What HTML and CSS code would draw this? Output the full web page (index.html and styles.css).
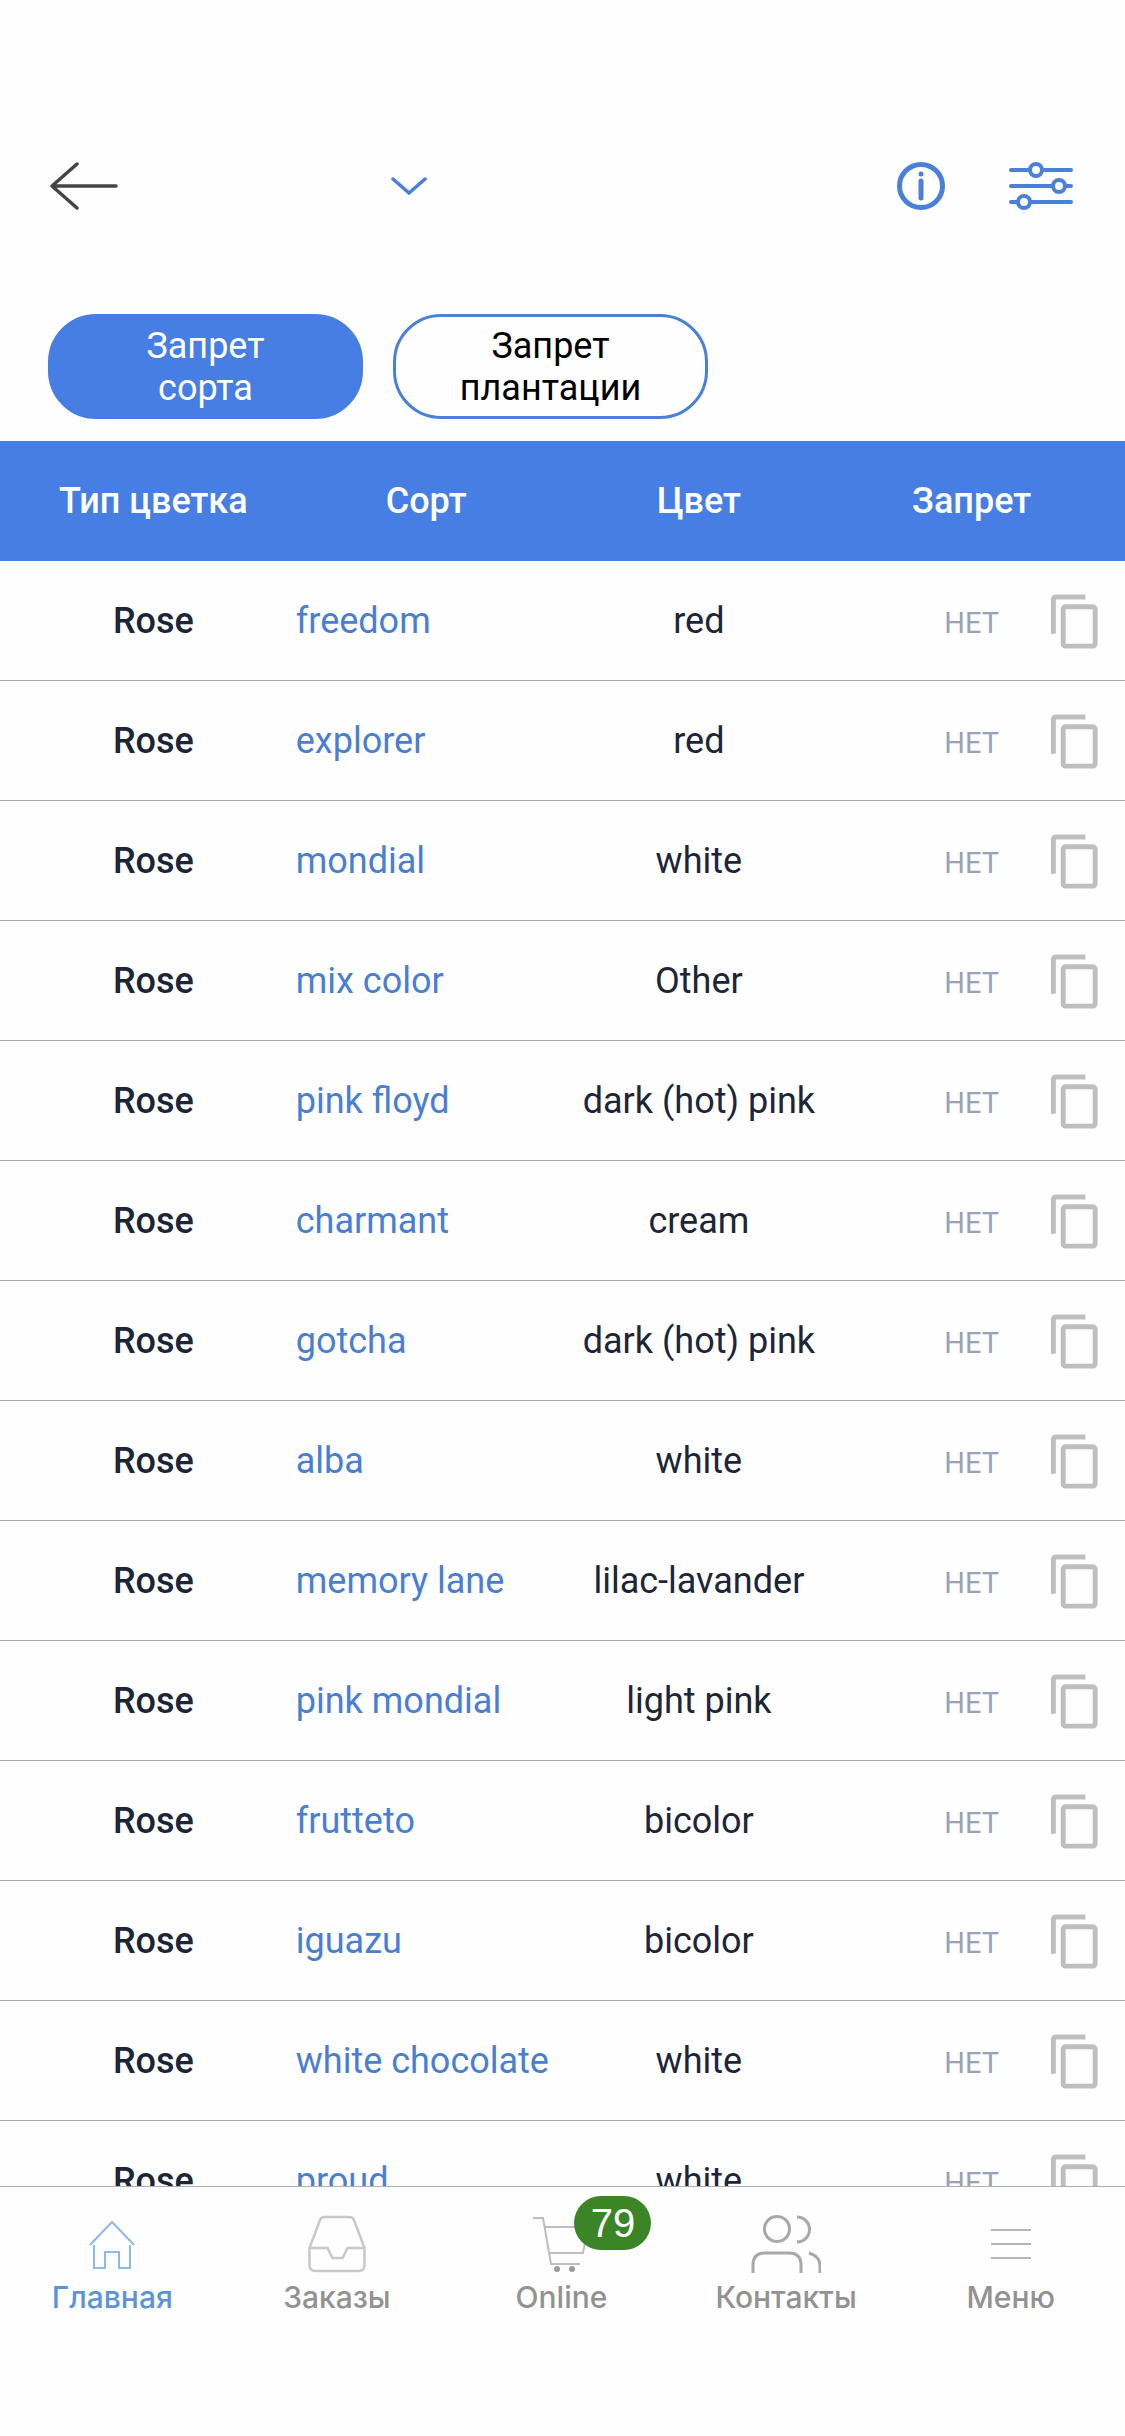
FILE: index.html
```html
<!DOCTYPE html>
<html lang="ru">
<head>
<meta charset="utf-8">
<meta name="viewport" content="width=device-width, initial-scale=1">
<title>Запрет сорта</title>
<link rel="stylesheet" href="styles.css">
</head>
<body>
<svg class="sprite" aria-hidden="true">
  <symbol id="copy" viewBox="0 0 24 24"><path d="M16 1H4c-1.100 0-2 .9-2 2v14h2V3h12V1zm3 4H8c-1.100 0-2 .9-2 2v14c0 1.100.9 2 2 2h11c1.100 0 2-.9 2-2V7c0-1.100-.9-2-2-2zm0 16H8V7h11v14z"/></symbol>
</svg>
<header class="topbar">
  <button class="icon-button" type="button" aria-label="Назад">
    <svg width="68" height="48" viewBox="0 0 68 48" fill="none" stroke="#444" stroke-width="3.500" stroke-linecap="round" stroke-linejoin="round"><path d="M27 2L2 24l25 22M2 24h64"/></svg>
  </button>
  <button class="icon-button picker" type="button" aria-label="Выбрать">
    <svg width="36" height="18" viewBox="0 0 36 18" fill="none" stroke="#4a80d8" stroke-width="3.500" stroke-linecap="round"><path d="M2 2l16 14L34 2"/></svg>
  </button>
  <div class="actions">
    <button class="icon-button" type="button" aria-label="Информация">
      <svg width="48" height="48" viewBox="0 0 48 48" fill="none" stroke="#4a80dc" stroke-linecap="round"><circle cx="24" cy="24" r="21.500" stroke-width="5"/><path d="M24 19v17" stroke-width="5"/><circle cx="24" cy="12" r="2.500" fill="#4a80dc" stroke="none"/></svg>
    </button>
    <button class="icon-button" type="button" aria-label="Фильтры">
      <svg width="64" height="48" viewBox="0 0 64 48" fill="none" stroke="#4a80dc" stroke-width="4" stroke-linecap="round"><path d="M2 8h18M34 8h28M2 24h41M57 24h5M2 40h6M22 40h40"/><circle cx="27" cy="8" r="6"/><circle cx="50" cy="24" r="6"/><circle cx="15" cy="40" r="6"/></svg>
    </button>
  </div>
</header>
<div class="tabs">
  <button class="tab tab-active" type="button">Запрет сорта</button>
  <button class="tab" type="button">Запрет плантации</button>
</div>
<main class="list">
  <table class="table">
    <thead><tr><th>Тип цветка</th><th>Сорт</th><th>Цвет</th><th>Запрет</th></tr></thead>
    <tbody id="rows"></tbody>
  </table>
</main>
<nav class="nav">
  <a class="nav-item nav-active" href="#home">
    <span class="nav-icon"><svg width="46" height="58" viewBox="0 0 46 58" fill="none" stroke="#8db8ea" stroke-width="2"><path d="M1 30L23 7l22 23M5 30v23h11V37h14v16h11V30"/></svg></span>
    <span>Главная</span>
  </a>
  <a class="nav-item" href="#orders">
    <span class="nav-icon"><svg width="58" height="58" viewBox="0 0 58 58" fill="none" stroke="#c8c8c8" stroke-width="2.500"><path d="M1.500 33v17q0 6 6 6h43q6 0 6-6V33L46 5q-1-3-5-3H17q-4 0-5 3zh18l5 10h10l5-10h18"/></svg></span>
    <span>Заказы</span>
  </a>
  <a class="nav-item" href="#online">
    <span class="nav-icon"><svg width="56" height="58" viewBox="0 0 56 58" fill="none" stroke="#bdbdbd" stroke-width="2"><path d="M0 3h10l8 46h29M12 12h43l-5 26H16"/><g fill="#9a9a9a" stroke="none"><circle cx="24" cy="54" r="3"/><circle cx="39" cy="54" r="3"/></g></svg><span class="badge">79</span></span>
    <span>Online</span>
  </a>
  <a class="nav-item" href="#contacts">
    <span class="nav-icon"><svg width="70" height="58" viewBox="0 0 70 58" fill="none" stroke="#a8a8a8" stroke-width="3"><circle cx="26" cy="14" r="12.500"/><path d="M46 2a12.500 12.500 0 0 1 0 25M2 58V50q0-12 12-12h24q12 0 12 12v8M58 38q11 3 11 13v7"/></svg></span>
    <span>Контакты</span>
  </a>
  <a class="nav-item" href="#menu">
    <span class="nav-icon"><svg width="40" height="58" viewBox="0 0 40 58" fill="none" stroke="#b4b4b4" stroke-width="2"><path d="M0 15h40M0 29h40M0 43h40"/></svg></span>
    <span>Меню</span>
  </a>
</nav>
<script src="rows.js"></script>
</body>
</html>
```
FILE: rows.js
```js
const varieties = [
  ["freedom", "red"],
  ["explorer", "red"],
  ["mondial", "white"],
  ["mix color", "Other"],
  ["pink floyd", "dark (hot) pink"],
  ["charmant", "cream"],
  ["gotcha", "dark (hot) pink"],
  ["alba", "white"],
  ["memory lane", "lilac-lavander"],
  ["pink mondial", "light pink"],
  ["frutteto", "bicolor"],
  ["iguazu", "bicolor"],
  ["white chocolate", "white"],
  ["proud", "white"]
];

document.getElementById("rows").innerHTML = varieties.map(([name, color]) => `
  <tr>
    <td class="type">Rose</td>
    <td class="name"><a href="#variety">${name}</a></td>
    <td>${color}</td>
    <td class="ban"><span>НЕТ</span><button class="icon-button" type="button" aria-label="Копировать ${name}"><svg class="copy-icon"><use href="#copy"/></svg></button></td>
  </tr>`).join("");
```
FILE: styles.css
```css
* {
  box-sizing: border-box;
}

body {
  margin: 0;
  height: 100vh;
  display: flex;
  flex-direction: column;
  overflow: hidden;
  background: #fefefe;
  color: #1c2638;
  font-family: Roboto, "Liberation Sans", sans-serif;
  font-size: 36px;
  line-height: 42px;
}

a {
  color: inherit;
  text-decoration: none;
}

.sprite {
  display: none;
}

.icon-button {
  padding: 0;
  border: 0;
  background: none;
}

.icon-button svg {
  display: block;
}

.topbar {
  flex: none;
  display: grid;
  grid-template-columns: 69fr 36px 131fr;
  align-items: center;
  padding: 162px 52px 104px 50px;
}

.topbar > .icon-button:first-child {
  justify-self: start;
}

.actions {
  display: flex;
  justify-content: flex-end;
  gap: 64px;
}

.tabs {
  flex: none;
  display: flex;
  gap: 30px;
  padding: 0 48px 22px;
}

.tab {
  width: 315px;
  min-height: 105px;
  padding: 0 60px;
  border: 3px solid #4a80d8;
  border-radius: 48px;
  background: #fefefe;
  color: #000;
  font: inherit;
}

.tab-active {
  border-color: #477ee4;
  background: #477ee4;
  color: #fff;
}

.list {
  flex: 1;
  min-height: 0;
  overflow: hidden;
}

.table,
.table thead,
.table tbody {
  display: block;
}

.table tr {
  display: grid;
  grid-template-columns: repeat(4, 1fr);
  align-items: center;
  height: 120px;
  padding: 0 17px;
  border-bottom: 1px solid #a3a8a8;
}

.table thead tr {
  border-bottom-color: #477ee4;
  background: #477ee4;
  color: #fff;
}

.table th,
.table td {
  padding: 0;
  text-align: center;
  font-weight: 400;
  white-space: nowrap;
}

.table th,
.table .type {
  font-weight: 500;
}

.table .name {
  padding-left: 6px;
  color: #4a7ed2;
  text-align: left;
}

.table .ban {
  display: grid;
  grid-template-columns: 1fr auto 1fr;
  align-items: center;
  padding: 1px 3px 0;
  color: #98a2b6;
  font-size: 29px;
}

.ban span {
  grid-column: 2;
  padding-top: 4px;
}

.ban .icon-button {
  justify-self: end;
}

.copy-icon {
  width: 59px;
  height: 59px;
  fill: #bfbfbf;
}

.nav {
  flex: none;
  display: grid;
  grid-template-columns: repeat(5, 1fr);
  min-height: 250px;
  padding: 28px 2px 0 0;
  border-top: 1px solid #b0b0b0;
  background: #fefefe;
  color: #929292;
  font-family: Inter, sans-serif;
  font-size: 30px;
  font-weight: 500;
  line-height: 36px;
}

.nav-item {
  display: flex;
  flex-direction: column;
  align-items: center;
  gap: 6px;
}

.nav-active {
  color: #5b94d8;
}

.nav-icon {
  position: relative;
  height: 58px;
}

.nav-icon svg {
  display: block;
}

.badge {
  position: absolute;
  top: -19px;
  left: 41px;
  width: 77px;
  height: 54px;
  border-radius: 27px;
  background: #3b8526;
  color: #fff;
  font: 40px/54px "Liberation Sans", sans-serif;
  text-align: center;
}
```
